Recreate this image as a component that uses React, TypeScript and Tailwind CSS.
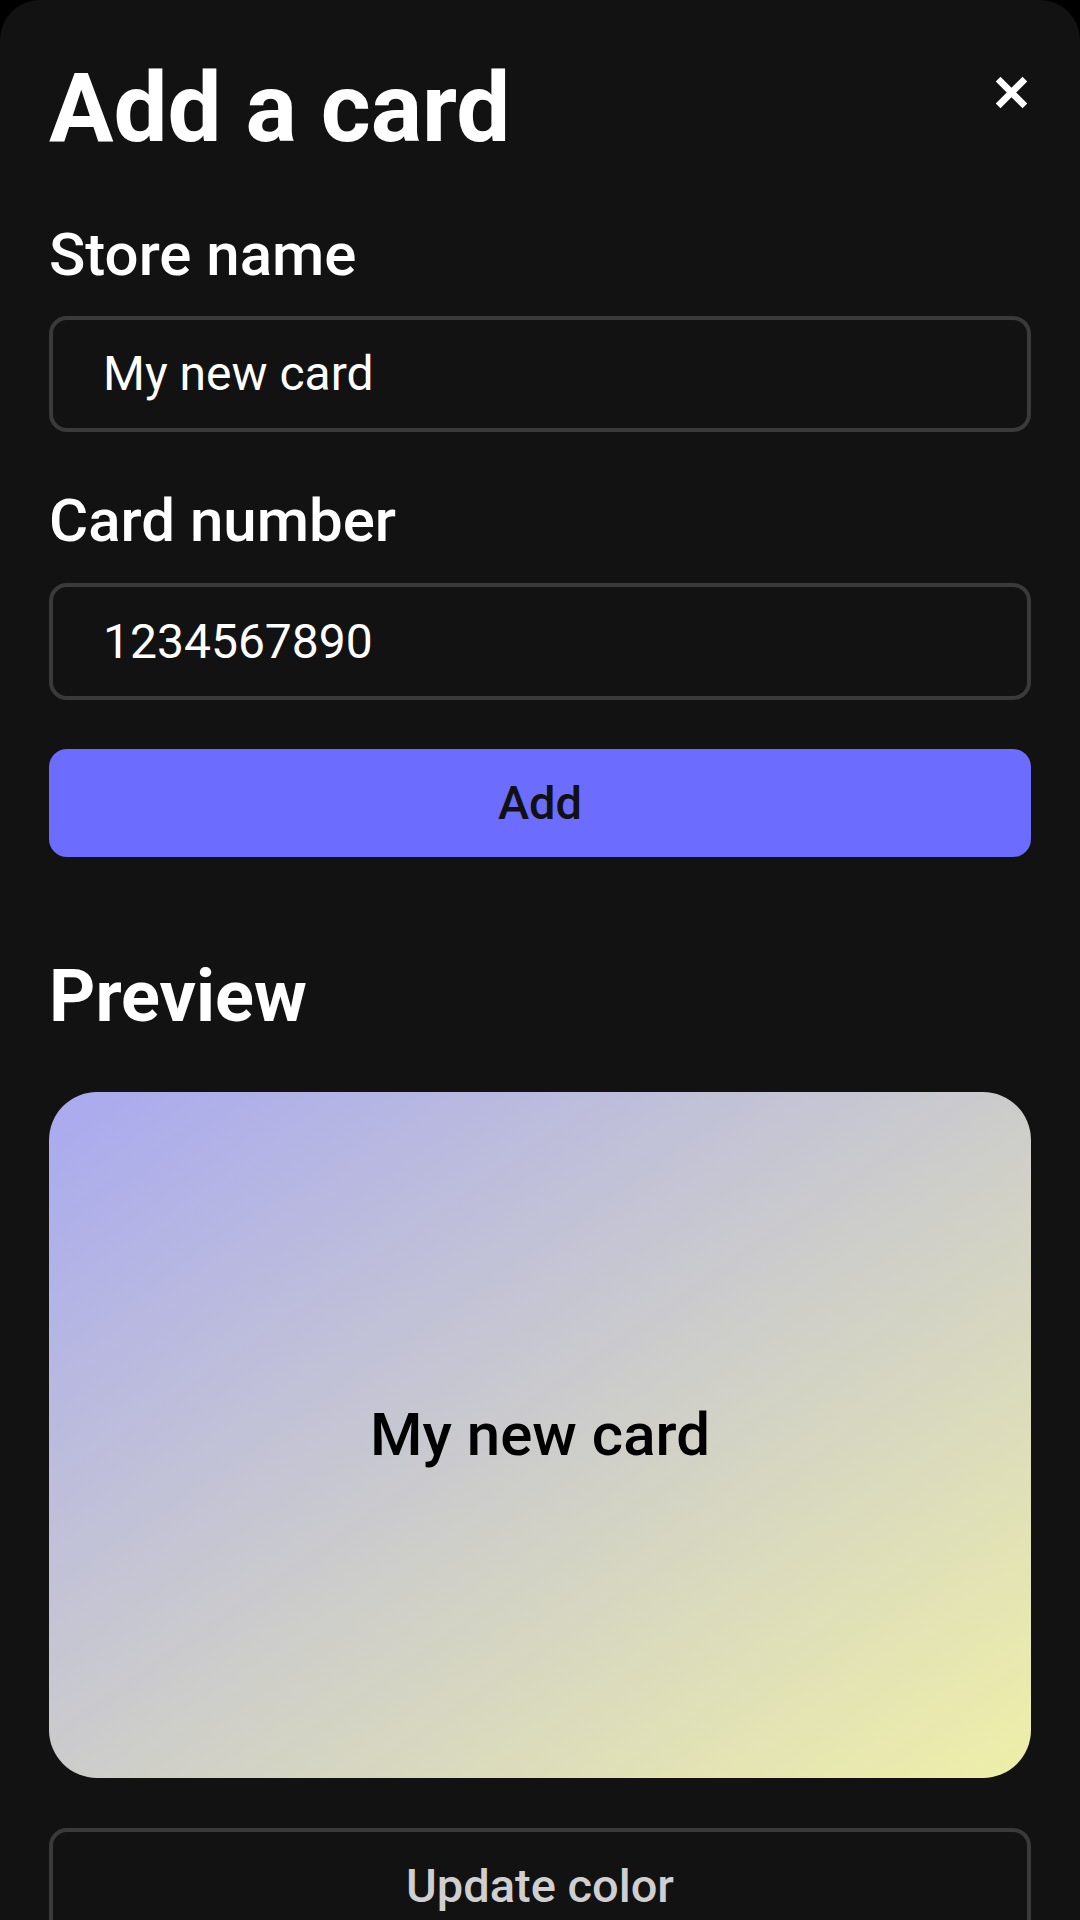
export default function App() {
  return (
    <div className="min-h-[1920px] w-full bg-black font-['Roboto',sans-serif]">
      <div className="min-h-[1920px] rounded-t-[40px] bg-[#121212] px-[49px] pt-[53px]">
        <div className="flex items-start justify-between">
          <h1 className="text-[96px] font-bold leading-[110px] text-white">Add a card</h1>
          <svg className="mt-[22px] mr-[2px] h-[35px] w-[35px]" viewBox="0 0 34 34">
            <path d="M4 4L30 30M30 4L4 30" stroke="#ffffff" strokeWidth="6.5" strokeLinecap="butt" />
          </svg>
        </div>

        <label className="mt-[57px] block text-[60px] font-medium leading-[70px] text-white">Store name</label>
        <div className="mt-[26px] flex h-[116px] items-center rounded-[18px] border-[4px] border-[#3a3a3a] px-[50px]">
          <span className="text-[48px] text-white">My new card</span>
        </div>

        <label className="mt-[54px] block text-[60px] font-medium leading-[70px] text-white">Card number</label>
        <div className="mt-[27px] flex h-[117px] items-center rounded-[18px] border-[4px] border-[#3a3a3a] px-[50px]">
          <span className="text-[48px] text-white">1234567890</span>
        </div>

        <button className="mt-[49px] flex h-[108px] w-full items-center justify-center rounded-[18px] bg-[#6c6cff] text-[47px] font-medium text-[#111111]">
          Add
        </button>

        <h2 className="mt-[98px] text-[72px] font-bold leading-[84px] text-white">Preview</h2>

        <div className="mt-[53px] flex h-[686px] items-center justify-center rounded-[48px] bg-[linear-gradient(to_bottom_right,#a9a9f0,#cccccc,#efefa9)]">
          <span className="text-[60px] font-medium text-black">My new card</span>
        </div>

        <button className="mt-[50px] flex h-[116px] w-full items-center justify-center rounded-[18px] border-[4px] border-[#3a3a3a] text-[47px] font-medium text-[#cfcfcf]">
          Update color
        </button>
      </div>
    </div>
  );
}
